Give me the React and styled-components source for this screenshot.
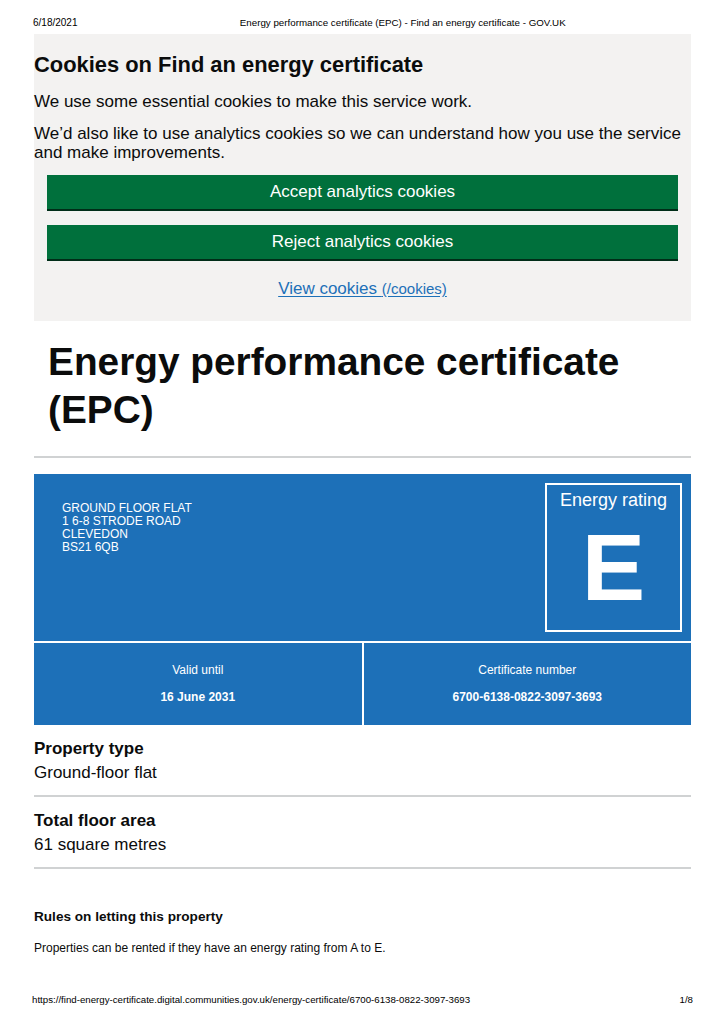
import React from "react";
import styled, { createGlobalStyle } from "styled-components";

const GlobalStyle = createGlobalStyle`
  html, body {
    margin: 0;
    padding: 0;
    background: #ffffff;
  }
  body {
    font-family: "Liberation Sans", Arial, sans-serif;
    color: #0b0c0c;
  }
  * {
    box-sizing: border-box;
  }
`;

const Page = styled.div`
  width: 725px;
  min-height: 1024px;
  display: flex;
  flex-direction: column;
  padding: 0 34px;
`;

const PrintHeader = styled.header`
  display: grid;
  grid-template-columns: auto 1fr;
  align-items: center;
  height: 34px;
  padding-top: 11px;
  margin: 0 -37px 0 -1px;
  font-size: 10px;
  color: #000;
`;

const HeaderTitle = styled.span`
  text-align: center;
  font-size: 9.75px;
`;

const CookieBanner = styled.section`
  background: #f3f2f1;
  padding: 18px 0 22px;
`;

const CookieHeading = styled.h2`
  margin: 0 0 14px;
  font-size: 21.9px;
  line-height: 26px;
  font-weight: 700;
`;

const CookieText = styled.p`
  margin: 0 0 13px;
  font-size: 17px;
  line-height: 19px;
`;

const ButtonStack = styled.div`
  display: flex;
  flex-direction: column;
  gap: 16px;
  padding: 0 13px;
  margin-top: 3px;
`;

const GreenButton = styled.button`
  height: 34px;
  border: 0;
  background: #00703c;
  box-shadow: 0 2px 0 #002d18;
  color: #fff;
  font-family: inherit;
  font-size: 17px;
  cursor: pointer;
`;

const LinkRow = styled.div`
  text-align: center;
  margin-top: 20px;
  line-height: 20px;
`;

const BlueLink = styled.a`
  color: #1d70b8;
  font-size: 17px;
  text-decoration: underline;
  text-underline-offset: 2px;
`;

const LinkHint = styled.span`
  font-size: 15px;
`;

const Title = styled.h1`
  margin: 17px 0 0;
  padding: 0 14px;
  max-width: 630px;
  font-size: 38.8px;
  line-height: 48px;
  font-weight: 700;
`;

const Rule = styled.hr`
  margin: ${(p) => p.$top || 0}px 0 0;
  border: 0;
  border-top: 2px solid #d0d2d3;
`;

const Certificate = styled.section`
  margin-top: 16px;
  background: #1d70b8;
  color: #fff;
`;

const CertTop = styled.div`
  display: flex;
  justify-content: space-between;
  padding: 9px 9px 9px 28px;
  height: 169px;
  border-bottom: 2px solid #fff;
`;

const Address = styled.div`
  padding-top: 19px;
  font-size: 12px;
  line-height: 13px;
  text-transform: uppercase;
`;

const RatingBox = styled.div`
  width: 137px;
  border: 2px solid #fff;
  display: flex;
  flex-direction: column;
  align-items: center;
`;

const RatingLabel = styled.div`
  margin-top: 3px;
  font-size: 18px;
  line-height: 24px;
`;

const RatingLetter = styled.div`
  margin-top: 5px;
  font-size: 95px;
  line-height: 100px;
  font-weight: 700;
`;

const CertBottom = styled.div`
  display: grid;
  grid-template-columns: 1fr 1fr;
  gap: 2px;
  background: #fff;
`;

const CertCell = styled.div`
  background: #1d70b8;
  height: 82px;
  display: flex;
  flex-direction: column;
  align-items: center;
  padding-top: 20px;
  gap: 13px;
  font-size: 12px;
  line-height: 14px;
`;

const CellValue = styled.div`
  font-weight: 700;
`;

const Detail = styled.div`
  padding-top: 14px;
`;

const DetailLabel = styled.h3`
  margin: 0;
  font-size: 17px;
  line-height: 20px;
  font-weight: 700;
`;

const DetailValue = styled.p`
  margin: 4px 0 12px;
  font-size: 17px;
  line-height: 20px;
`;

const RulesHeading = styled.h4`
  margin: 40px 0 0;
  font-size: 13.6px;
  line-height: 16px;
  font-weight: 700;
`;

const RulesText = styled.p`
  margin: 16px 0 0;
  font-size: 12px;
  line-height: 14px;
`;

const PrintFooter = styled.footer`
  margin-top: auto;
  display: flex;
  justify-content: space-between;
  margin-left: -2px;
  margin-right: -2px;
  padding-bottom: 19px;
  font-size: 9.7px;
  color: #000;
`;

const details = [
  { label: "Property type", value: "Ground-floor flat" },
  { label: "Total floor area", value: "61 square metres" },
];

const App = () => {
  return (
    <Page>
      <GlobalStyle />
      <PrintHeader>
        <span>6/18/2021</span>
        <HeaderTitle>
          Energy performance certificate (EPC) - Find an energy certificate - GOV.UK
        </HeaderTitle>
      </PrintHeader>

      <CookieBanner>
        <CookieHeading>Cookies on Find an energy certificate</CookieHeading>
        <CookieText>We use some essential cookies to make this service work.</CookieText>
        <CookieText>
          We’d also like to use analytics cookies so we can understand how you use the service
          and make improvements.
        </CookieText>
        <ButtonStack>
          <GreenButton>Accept analytics cookies</GreenButton>
          <GreenButton>Reject analytics cookies</GreenButton>
        </ButtonStack>
        <LinkRow>
          <BlueLink href="#">
            View cookies <LinkHint>(/cookies)</LinkHint>
          </BlueLink>
        </LinkRow>
      </CookieBanner>

      <Title>Energy performance certificate (EPC)</Title>
      <Rule $top={22} />

      <Certificate>
        <CertTop>
          <Address>
            Ground floor flat
            <br />1 6-8 Strode Road
            <br />Clevedon
            <br />BS21 6QB
          </Address>
          <RatingBox>
            <RatingLabel>Energy rating</RatingLabel>
            <RatingLetter>E</RatingLetter>
          </RatingBox>
        </CertTop>
        <CertBottom>
          <CertCell>
            <div>Valid until</div>
            <CellValue>16 June 2031</CellValue>
          </CertCell>
          <CertCell>
            <div>Certificate number</div>
            <CellValue>6700-6138-0822-3097-3693</CellValue>
          </CertCell>
        </CertBottom>
      </Certificate>

      {details.map((d) => (
        <React.Fragment key={d.label}>
          <Detail>
            <DetailLabel>{d.label}</DetailLabel>
            <DetailValue>{d.value}</DetailValue>
          </Detail>
          <Rule />
        </React.Fragment>
      ))}

      <RulesHeading>Rules on letting this property</RulesHeading>
      <RulesText>Properties can be rented if they have an energy rating from A to E.</RulesText>

      <PrintFooter>
        <span>
          https://find-energy-certificate.digital.communities.gov.uk/energy-certificate/6700-6138-0822-3097-3693
        </span>
        <span>1/8</span>
      </PrintFooter>
    </Page>
  );
};

export default App;
